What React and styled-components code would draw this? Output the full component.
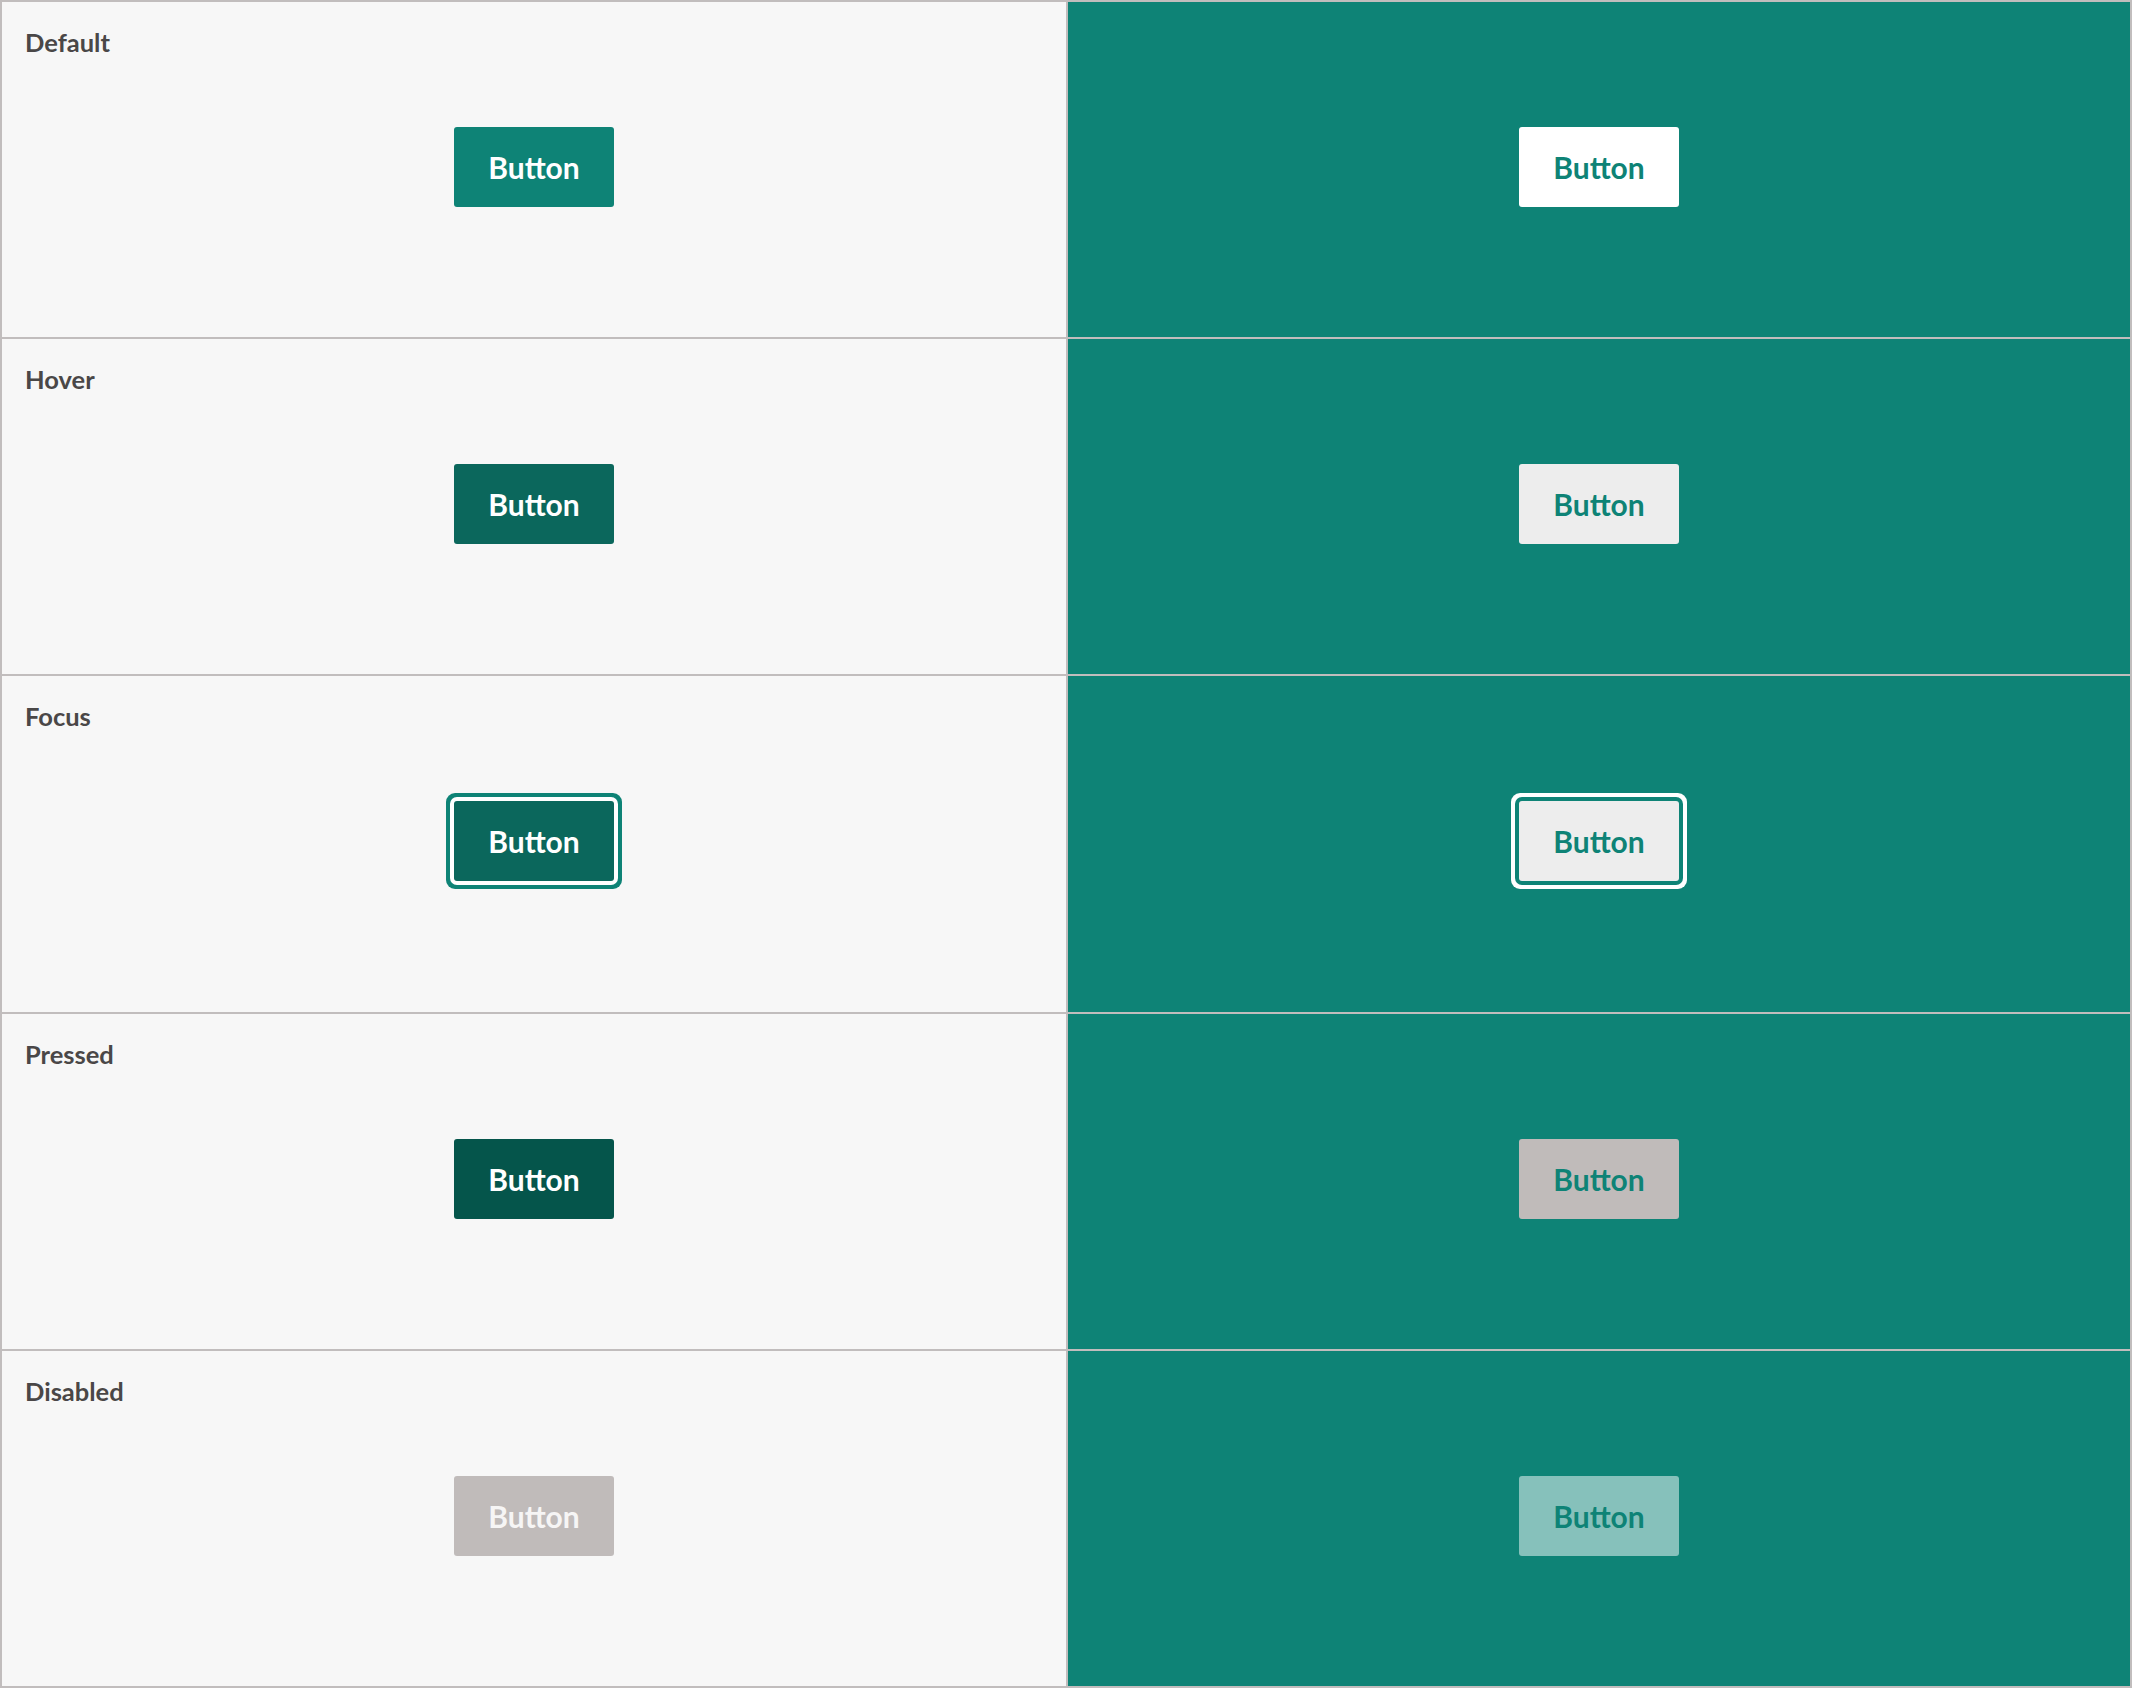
import React from "react"
import styled, { createGlobalStyle, css } from "styled-components"

const colors = {
  teal: "#0e8376",
  tealHover: "#0b675c",
  tealPressed: "#05554b",
  tealDisabled: "#86c1bb",
  light: "#f7f7f7",
  line: "#c1bdbd",
  grey: "#c0bbba",
  greyLight: "#ededed",
  label: "#4a4747",
  white: "#ffffff",
}

const GlobalStyle = createGlobalStyle`
  html, body {
    margin: 0;
    padding: 0;
  }
  body {
    font-family: Lato, "Liberation Sans", sans-serif;
  }
`

const Grid = styled.div`
  display: grid;
  grid-template-columns: 1064px 1fr;
  grid-template-rows: repeat(5, 1fr);
  gap: 2px;
  padding: 2px;
  height: 100vh;
  box-sizing: border-box;
  background: ${colors.line};
`

const Cell = styled.section`
  display: grid;
  grid-template-areas: "stack";
  background: ${(p) => (p.$dark ? colors.teal : colors.light)};
  > * {
    grid-area: stack;
  }
`

const Label = styled.h4`
  margin: 0;
  align-self: start;
  justify-self: start;
  padding: 25px 0 0 23px;
  font-size: 25.5px;
  font-weight: 700;
  color: ${colors.label};
`

const variants = {
  primary: {
    default: css`background: ${colors.teal}; color: ${colors.white};`,
    hover: css`background: ${colors.tealHover}; color: ${colors.white};`,
    focus: css`
      background: ${colors.tealHover};
      color: ${colors.white};
      box-shadow: 0 0 0 4px ${colors.white}, 0 0 0 8px ${colors.teal};
    `,
    pressed: css`background: ${colors.tealPressed}; color: ${colors.white};`,
    disabled: css`background: ${colors.grey}; color: #f6f5f5;`,
  },
  inverse: {
    default: css`background: ${colors.white}; color: ${colors.teal};`,
    hover: css`background: ${colors.greyLight}; color: ${colors.teal};`,
    focus: css`
      background: ${colors.greyLight};
      color: ${colors.teal};
      box-shadow: 0 0 0 4px ${colors.teal}, 0 0 0 8px ${colors.white};
    `,
    pressed: css`background: ${colors.grey}; color: ${colors.teal};`,
    disabled: css`background: ${colors.tealDisabled}; color: ${colors.teal};`,
  },
}

const Button = styled.button`
  place-self: center;
  width: 160px;
  height: 80px;
  margin-bottom: 5px;
  border: none;
  border-radius: 3px;
  font-family: Lato, "Liberation Sans", sans-serif;
  font-size: 30px;
  font-weight: 700;
  cursor: pointer;
  ${(p) => variants[p.$kind][p.$state]}
`

const rows = [
  { name: "Default", state: "default" },
  { name: "Hover", state: "hover" },
  { name: "Focus", state: "focus" },
  { name: "Pressed", state: "pressed" },
  { name: "Disabled", state: "disabled" },
]

const App = () => {
  return (
    <>
      <GlobalStyle />
      <Grid>
        {rows.map((row) => (
          <React.Fragment key={row.name}>
            <Cell>
              <Label>{row.name}</Label>
              <Button $kind="primary" $state={row.state}>
                Button
              </Button>
            </Cell>
            <Cell $dark>
              <Button $kind="inverse" $state={row.state}>
                Button
              </Button>
            </Cell>
          </React.Fragment>
        ))}
      </Grid>
    </>
  )
}

export default App
